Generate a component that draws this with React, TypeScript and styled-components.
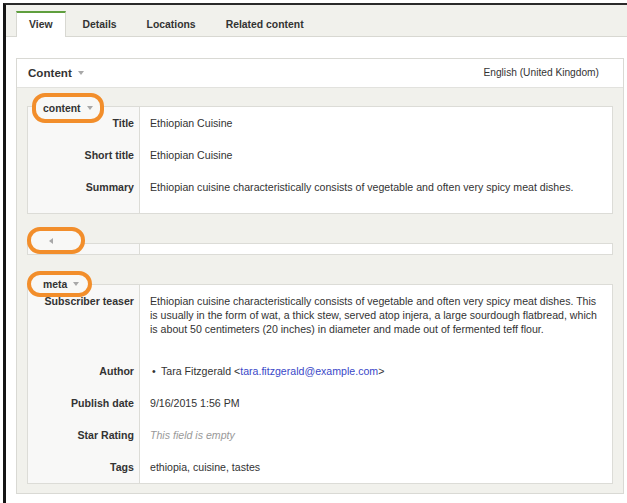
import React from 'react';
import styled, { createGlobalStyle, css } from 'styled-components';

const GlobalStyle = createGlobalStyle`
  html, body {
    margin: 0;
    padding: 0;
    background: #fff;
  }
  body {
    font-family: "Liberation Sans", Arial, sans-serif;
    font-size: 10.6px;
    color: #333;
  }
  * {
    box-sizing: border-box;
  }
`;

const Frame = styled.div`
  margin: 3px 0 0 3px;
  min-height: 500px;
  border-left: 3px solid #151515;
  border-top: 2px solid #2a2a2a;
`;

const TabBar = styled.nav`
  display: flex;
  align-items: flex-end;
  gap: 4px;
  padding: 6px 0 0 10px;
  background: #f1f1ec;
  border-bottom: 1px solid #d8d8d2;
`;

const Tab = styled.a<{ $active?: boolean }>`
  height: 26px;
  line-height: 24px;
  margin-bottom: -1px;
  padding: 0 12px;
  border: 1px solid transparent;
  border-top-width: 2px;
  border-bottom: none;
  font-size: 10.4px;
  font-weight: bold;
  color: #333;
  cursor: pointer;

  ${(p) => p.$active && css`
    background: #fff;
    border-color: #d8d8d2;
    border-top-color: #5f9f3e;
  `}
`;

const Main = styled.main`
  padding: 21px 3px 0 10px;
`;

const Panel = styled.section`
  border: 1px solid #d9d9d4;
  background: #f1f1ec;
`;

const PanelHeader = styled.header`
  display: flex;
  align-items: center;
  justify-content: space-between;
  height: 29px;
  padding: 0 24px 1px 11px;
  background: #fff;
  border-bottom: 1px solid #e2e2de;
`;

const PanelTitle = styled.h2`
  display: flex;
  align-items: center;
  gap: 6px;
  margin: 0;
  font-size: 11.6px;
  font-weight: bold;
  color: #333;
`;

const Language = styled.span`
  font-size: 10.2px;
  color: #333;
`;

const Caret = styled.span<{ $dir?: 'down' | 'left' }>`
  display: inline-block;
  width: 0;
  height: 0;
  ${(p) => p.$dir === 'left'
    ? css`
      border-top: 3px solid transparent;
      border-bottom: 3px solid transparent;
      border-right: 4px solid #a8a8a8;
    `
    : css`
      border-left: 3px solid transparent;
      border-right: 3px solid transparent;
      border-top: 4px solid #a8a8a8;
    `}
`;

const PanelBody = styled.div`
  display: flex;
  flex-direction: column;
  gap: 29px;
  padding: 18px 10px 9px 10px;
`;

const Group = styled.section`
  display: flex;
  flex-direction: column;
  border: 1px solid #dcdcd7;
  background: #fff;
`;

// legend tag sitting on the group's top border, ringed in orange
const Legend = styled.div<{ $x: number; $top: number; $h: number; $w: number; $pad: number }>`
  position: relative;
  z-index: 1;
  display: flex;
  align-items: center;
  gap: 6px;
  align-self: flex-start;
  width: ${(p) => p.$w}px;
  height: ${(p) => p.$h}px;
  margin: ${(p) => -p.$top}px 0 ${(p) => p.$top - p.$h}px ${(p) => p.$x}px;
  padding-left: ${(p) => p.$pad}px;
  border: 4px solid #f28e2b;
  border-radius: 13px;
  background: #f8f8f6;
  font-size: 10.4px;
  font-weight: bold;
  color: #333;
`;

const Row = styled.div`
  display: grid;
  grid-template-columns: 112px 1fr;
`;

const Label = styled.div`
  padding: 9px 5px 9px 0;
  text-align: right;
  font-weight: bold;
  line-height: 14px;
  background: #f8f8f7;
  border-right: 1px solid #dcdcd7;
`;

const Value = styled.div<{ $empty?: boolean }>`
  padding: 9px 10px;
  line-height: 14px;
  color: #333;

  ${(p) => p.$empty && css`
    font-style: italic;
    color: #999;
  `}
`;

const Text = styled.p`
  margin: 0 0 10px;
`;

const Blank = styled.div`
  height: 10px;
  background: #f8f8f7;
  border-right: 1px solid #dcdcd7;
`;

const List = styled.ul`
  margin: 0;
  padding: 0;
  list-style: none;
`;

const Item = styled.li`
  &::before {
    content: "•";
    display: inline-block;
    width: 9px;
    padding-left: 2px;
  }
`;

const Mail = styled.a`
  color: #3a48c8;
  text-decoration: none;
`;

interface Field {
  label: string;
  value: React.ReactNode;
  empty?: boolean;
}

const contentFields: Field[] = [
  { label: 'Title', value: 'Ethiopian Cuisine' },
  { label: 'Short title', value: 'Ethiopian Cuisine' },
  {
    label: 'Summary',
    value: <Text>Ethiopian cuisine characteristically consists of vegetable and often very spicy meat dishes.</Text>,
  },
];

const metaFields: Field[] = [
  {
    label: 'Subscriber teaser',
    value: (
      <Text>
        Ethiopian cuisine characteristically consists of vegetable and often very spicy meat dishes. This
        is usually in the form of wat, a thick stew, served atop injera, a large sourdough flatbread, which
        is about 50 centimeters (20 inches) in diameter and made out of fermented teff flour.
      </Text>
    ),
  },
  {
    label: 'Author',
    value: (
      <List>
        <Item>
          Tara Fitzgerald &lt;<Mail href="#">tara.fitzgerald@example.com</Mail>&gt;
        </Item>
      </List>
    ),
  },
  { label: 'Publish date', value: '9/16/2015 1:56 PM' },
  { label: 'Star Rating', value: 'This field is empty', empty: true },
  { label: 'Tags', value: 'ethiopia, cuisine, tastes' },
];

const Fields: React.FC<{ fields: Field[] }> = ({ fields }) => (
  <>
    {fields.map((f) => (
      <Row key={f.label}>
        <Label>{f.label}</Label>
        <Value $empty={f.empty}>{f.value}</Value>
      </Row>
    ))}
  </>
);

const tabs = ['View', 'Details', 'Locations', 'Related content'];

const App: React.FC = () => {
  return (
    <>
      <GlobalStyle />
      <Frame>
        <TabBar>
          {tabs.map((t, i) => (
            <Tab key={t} $active={i === 0}>{t}</Tab>
          ))}
        </TabBar>
        <Main>
          <Panel>
            <PanelHeader>
              <PanelTitle>
                Content <Caret />
              </PanelTitle>
              <Language>English (United Kingdom)</Language>
            </PanelHeader>
            <PanelBody>
              <Group>
                <Legend $x={4} $top={14} $h={30} $w={72} $pad={7}>
                  content <Caret />
                </Legend>
                <Fields fields={contentFields} />
              </Group>

              <Group>
                <Legend $x={-1} $top={17} $h={27} $w={58} $pad={18}>
                  <Caret $dir="left" />
                </Legend>
                <Row>
                  <Blank />
                  <div />
                </Row>
              </Group>

              <Group>
                <Legend $x={-1} $top={14} $h={26} $w={65} $pad={12}>
                  meta <Caret />
                </Legend>
                <Fields fields={metaFields} />
              </Group>
            </PanelBody>
          </Panel>
        </Main>
      </Frame>
    </>
  );
};

export default App;
